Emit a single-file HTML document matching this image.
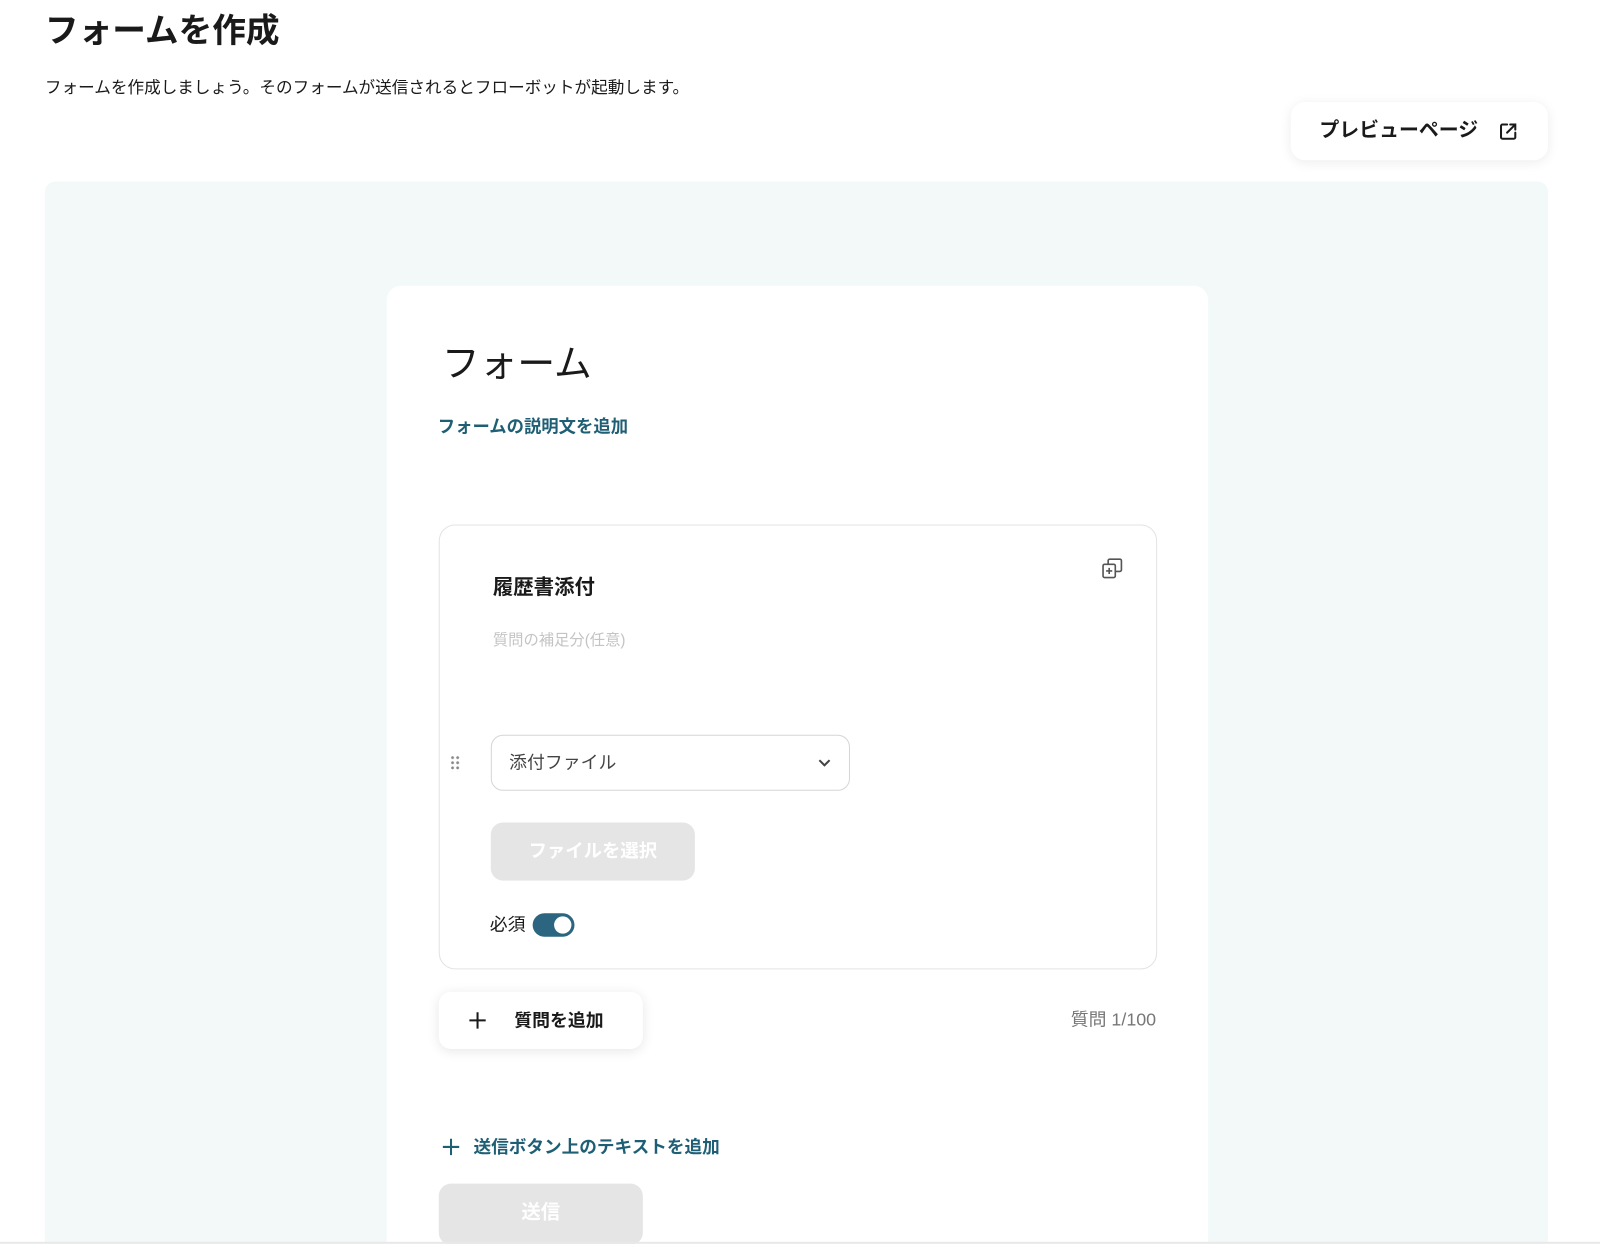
<!DOCTYPE html>
<html><head><meta charset="utf-8"><style>
*{box-sizing:border-box;margin:0;padding:0}
html,body{width:1600px;height:1244px;background:#fff;overflow:hidden}
#w{position:absolute;left:0;top:0;width:1568px;height:1219px;overflow:hidden;transform:scale(1.0204);transform-origin:0 0;font-family:"Liberation Sans","Noto Sans CJK JP",sans-serif;color:#1a1a1a}
.a{position:absolute;white-space:nowrap}
</style></head><body><div id="w">
<div class="a" style="left:44px;top:8px;font-size:33px;font-weight:700;line-height:44px">フォームを作成</div>
<div class="a" style="left:44px;top:75px;font-size:16.3px;line-height:22px">フォームを作成しましょう。そのフォームが送信されるとフローボットが起動します。</div>
<div class="a" style="left:1265px;top:100px;width:252px;height:57px;border-radius:14px;background:#fff;box-shadow:0 2px 12px rgba(0,0,0,.08);font-size:19.5px;font-weight:700;line-height:57px;padding-left:28px">プレビューページ
<svg class="a" style="left:203px;top:19px" width="20" height="20" viewBox="0 0 20 20" fill="none" stroke="#1a1a1a" stroke-width="2" stroke-linecap="round"><path d="M9 3H4.5A1.5 1.5 0 0 0 3 4.5v11A1.5 1.5 0 0 0 4.5 17h11a1.5 1.5 0 0 0 1.5-1.5V11"/><path d="M12 3h5v5M17 3l-8 8"/></svg></div>
<div class="a" style="left:44px;top:178px;width:1473px;height:1066px;background:#f3f8f8;border-radius:10px 10px 0 0"></div>
<div class="a" style="left:379px;top:280px;width:805px;height:964px;background:#fff;border-radius:14px 14px 0 0"></div>
<div class="a" style="left:433px;top:333px;font-size:37px;line-height:48px">フォーム</div>
<div class="a" style="left:429px;top:407px;font-size:17px;font-weight:700;color:#1f5f75;line-height:24px">フォームの説明文を追加</div>
<div class="a" style="left:430px;top:514px;width:704px;height:436px;border:1px solid #e3e3e3;border-radius:16px"></div>
<svg class="a" style="left:1078px;top:545px" width="24" height="24" viewBox="0 0 24 24" fill="none" stroke="#555" stroke-width="1.6"><rect x="3" y="8" width="12" height="13" rx="1.5"/><path d="M8 8V4.5A1.5 1.5 0 0 1 9.5 3h10A1.5 1.5 0 0 1 21 4.5v9a1.5 1.5 0 0 1-1.5 1.5H15"/><path d="M9 11.5v6M6 14.5h6"/></svg>
<div class="a" style="left:483px;top:563px;font-size:20px;font-weight:700;line-height:26px">履歴書添付</div>
<div class="a" style="left:483px;top:618px;font-size:15px;color:#c4c4c4;line-height:20px">質問の補足分(任意)</div>
<div class="a" style="left:441px;top:740px;width:10px;height:16px;background:radial-gradient(circle,#888 1.2px,transparent 1.6px) 0 0/5px 5px"></div>
<div class="a" style="left:481px;top:720px;width:352px;height:55px;border:1px solid #d6d6d6;border-radius:12px;font-size:17.5px;color:#444;line-height:53px;padding-left:17px">添付ファイル
<svg class="a" style="left:319px;top:22px" width="14" height="10" viewBox="0 0 14 10" fill="none" stroke="#444" stroke-width="2"><path d="M2 2l5 5 5-5"/></svg></div>
<div class="a" style="left:481px;top:806px;width:200px;height:57px;background:#e5e5e5;border-radius:12px;color:#fff;font-size:18px;font-weight:700;text-align:center;line-height:57px">ファイルを選択</div>
<div class="a" style="left:480px;top:894px;font-size:17.5px;line-height:24px">必須</div>
<div class="a" style="left:522px;top:895px;width:41px;height:23px;background:#2b6580;border-radius:12px"><div class="a" style="right:3px;top:3px;width:17px;height:17px;background:#fff;border-radius:50%"></div></div>
<div class="a" style="left:430px;top:972px;width:200px;height:56px;background:#fff;border-radius:12px;box-shadow:0 2px 12px rgba(0,0,0,.1);font-size:17.5px;font-weight:700;line-height:56px;padding-left:74px">質問を追加
<svg class="a" style="left:29px;top:19px" width="18" height="18" viewBox="0 0 18 18" stroke="#1a1a1a" stroke-width="2"><path d="M9 1v16M1 9h16"/></svg></div>
<div class="a" style="left:950px;top:987px;width:183px;text-align:right;font-size:17.5px;color:#777;line-height:24px">質問 1/100</div>
<svg class="a" style="left:433px;top:1115px" width="18" height="18" viewBox="0 0 18 18" stroke="#1f5f75" stroke-width="2"><path d="M9 1v16M1 9h16"/></svg>
<div class="a" style="left:464px;top:1112px;font-size:17.3px;font-weight:700;color:#1f5f75;line-height:24px">送信ボタン上のテキストを追加</div>
<div class="a" style="left:430px;top:1160px;width:200px;height:60px;background:#e5e5e5;border-radius:12px;color:#fff;font-size:19px;font-weight:700;text-align:center;line-height:58px">送信</div>
<div class="a" style="left:0;top:1217px;width:1568px;height:2px;background:#e8e8e8"></div>
</div></body></html>
